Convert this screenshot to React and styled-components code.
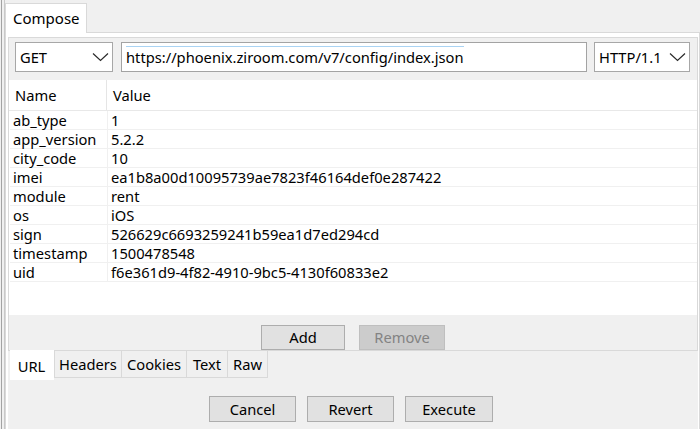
import React from "react";
import styled, { createGlobalStyle } from "styled-components";

const Global = createGlobalStyle`
  html, body { margin: 0; padding: 0; background: #f0f0f0; }
  body { font-family: "Noto Sans", "Open Sans", sans-serif; font-size: 14.7px; color: #000; }
  * { box-sizing: border-box; }
`;

const Shell = styled.div`
  width: 700px;
  height: 429px;
  overflow: hidden;
  display: flex;
  padding-left: 1px;
  background: #f0f0f0;
`;

const EdgeOuter = styled.div`
  flex: 1;
  display: flex;
  border-left: 1px solid #a3a3a3;
  padding-left: 2px;
`;

const EdgeInner = styled.div`
  flex: 1;
  display: flex;
  flex-direction: column;
  border-left: 1px solid #c9c9c9;
  min-width: 0;
`;

const TopTabBar = styled.div`
  display: flex;
  align-items: flex-end;
  height: 33px;
  padding-top: 3px;
`;

const TopTab = styled.div`
  width: 82px;
  height: 30px;
  background: #fff;
  border: 1px solid #d9d9d9;
  border-bottom: none;
  padding-left: 7px;
  display: flex;
  align-items: center;
  line-height: 1;
  font-size: 15px;
`;

const TabFiller = styled.div`
  flex: 1;
  align-self: stretch;
  border-bottom: 1px solid #d9d9d9;
`;

const OuterPane = styled.div`
  flex: 1;
  display: flex;
  flex-direction: column;
  background: #fff;
  border: 1px solid #d9d9d9;
  border-top: none;
  border-bottom: none;
  padding: 4px 1px 0 2px;
  min-height: 0;
`;

const Body = styled.div`
  flex: 1;
  display: flex;
  flex-direction: column;
  background: #f0f0f0;
`;

const InnerPane = styled.div`
  display: flex;
  flex-direction: column;
  border: 1px solid #d9d9d9;
  background: #f0f0f0;
`;

const RequestRow = styled.div`
  display: flex;
  height: 30px;
  margin-top: 4px;
  padding: 0 7px 0 6px;
`;

const Combo = styled.div`
  width: ${(p) => p.$w}px;
  height: 30px;
  background: #fff;
  border: 1px solid #a7a7a7;
  display: flex;
  align-items: center;
  justify-content: space-between;
  padding: 0 3px 0 4px;
  line-height: 1;
`;

const UrlInput = styled.div`
  flex: 1;
  height: 30px;
  margin: 0 7px 0 8px;
  background: #fff;
  border: 1px solid #a3a3a3;
  display: flex;
  align-items: center;
  padding-left: 4px;
  line-height: 1;
  white-space: nowrap;
  overflow: hidden;
`;

const UrlText = styled.span`
  display: inline-block;
  border-top: 1px solid #a9d3f3;
  padding-top: 3px;
  margin-top: -4px;
`;

const Table = styled.div`
  margin-top: 8px;
  height: 235px;
  background: #fff;
  display: flex;
  flex-direction: column;
`;

const HeaderRow = styled.div`
  display: grid;
  grid-template-columns: 98px 1fr;
  height: 31px;
  border-bottom: 1px solid #e8e8e8;
`;

const HeaderCell = styled.div`
  display: flex;
  align-items: center;
  padding-left: ${(p) => p.$pl}px;
  border-right: ${(p) => (p.$divider ? "1px solid #e5e5e5" : "none")};
  line-height: 1;
`;

const DataRow = styled.div`
  display: grid;
  grid-template-columns: 98px 1fr;
  height: 19px;
  border-bottom: 1px solid #f0f0f0;
  margin-left: 1px;
`;

const DataCell = styled.div`
  display: flex;
  align-items: center;
  padding-left: ${(p) => p.$pl}px;
  border-right: ${(p) => (p.$divider ? "1px solid #f0f0f0" : "none")};
  line-height: 1;
  white-space: nowrap;
`;

const ButtonStrip = styled.div`
  height: 35px;
  padding-top: 10px;
  display: flex;
  justify-content: center;
  gap: 14px;
`;

const Button = styled.div`
  width: ${(p) => p.$w}px;
  height: ${(p) => p.$h}px;
  background: ${(p) => (p.$disabled ? "#cccccc" : "#e1e1e1")};
  border: 1px solid ${(p) => (p.$disabled ? "#bfbfbf" : "#adadad")};
  color: ${(p) => (p.$disabled ? "#838383" : "#000")};
  display: flex;
  align-items: center;
  justify-content: center;
  line-height: 1;
`;

const BottomTabBar = styled.div`
  display: flex;
  align-items: flex-start;
  padding-left: 2px;
  height: 30px;
`;

const BottomTab = styled.div`
  width: ${(p) => p.$w}px;
  height: ${(p) => (p.$active ? 30 : 27)}px;
  margin-top: ${(p) => (p.$active ? -1 : 0)}px;
  background: ${(p) => (p.$active ? "#fff" : "#f0f0f0")};
  border: 1px solid ${(p) => (p.$active ? "#fff" : "#d9d9d9")};
  border-top: none;
  border-left: ${(p) => (p.$first ? "1px solid #d9d9d9" : "none")};
  display: flex;
  align-items: center;
  justify-content: center;
  padding-top: ${(p) => (p.$active ? 3 : 0)}px;
  line-height: 1;
`;

const ActionRow = styled.div`
  margin-top: 15px;
  display: flex;
  justify-content: center;
  gap: 11px;
  padding-right: 4px;
`;

const Chevron = () => (
  <svg width="17" height="10" viewBox="0 0 17 10">
    <path d="M1 1.5 L8.5 8.5 L16 1.5" fill="none" stroke="#2a2a2a" strokeWidth="1.2" />
  </svg>
);

const rows = [
  ["ab_type", "1"],
  ["app_version", "5.2.2"],
  ["city_code", "10"],
  ["imei", "ea1b8a00d10095739ae7823f46164def0e287422"],
  ["module", "rent"],
  ["os", "iOS"],
  ["sign", "526629c6693259241b59ea1d7ed294cd"],
  ["timestamp", "1500478548"],
  ["uid", "f6e361d9-4f82-4910-9bc5-4130f60833e2"],
];

const tabs = [
  ["URL", 44],
  ["Headers", 68],
  ["Cookies", 65],
  ["Text", 41],
  ["Raw", 40],
];

export default function App() {
  return (
    <>
      <Global />
      <Shell>
        <EdgeOuter>
          <EdgeInner>
            <TopTabBar>
              <TopTab>Compose</TopTab>
              <TabFiller />
            </TopTabBar>
            <OuterPane>
              <Body>
                <InnerPane>
                  <RequestRow>
                    <Combo $w={98}>
                      <span>GET</span>
                      <Chevron />
                    </Combo>
                    <UrlInput>
                      <UrlText>https://phoenix.ziroom.com/v7/config/index.json</UrlText>
                    </UrlInput>
                    <Combo $w={96}>
                      <span>HTTP/1.1</span>
                      <Chevron />
                    </Combo>
                  </RequestRow>
                  <Table>
                    <HeaderRow>
                      <HeaderCell $pl={6} $divider>Name</HeaderCell>
                      <HeaderCell $pl={6}>Value</HeaderCell>
                    </HeaderRow>
                    {rows.map(([k, v]) => (
                      <DataRow key={k}>
                        <DataCell $pl={3} $divider>{k}</DataCell>
                        <DataCell $pl={3}>{v}</DataCell>
                      </DataRow>
                    ))}
                  </Table>
                  <ButtonStrip>
                    <Button $w={84} $h={25}>Add</Button>
                    <Button $w={86} $h={25} $disabled>Remove</Button>
                  </ButtonStrip>
                </InnerPane>
                <BottomTabBar>
                  {tabs.map(([t, w], i) => (
                    <BottomTab key={t} $w={w} $active={i === 0} $first={i === 1}>
                      {t}
                    </BottomTab>
                  ))}
                </BottomTabBar>
                <ActionRow>
                  <Button $w={87} $h={26}>Cancel</Button>
                  <Button $w={87} $h={26}>Revert</Button>
                  <Button $w={88} $h={26}>Execute</Button>
                </ActionRow>
              </Body>
            </OuterPane>
          </EdgeInner>
        </EdgeOuter>
      </Shell>
    </>
  );
}
